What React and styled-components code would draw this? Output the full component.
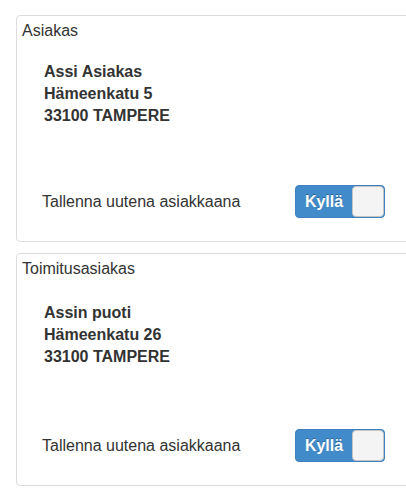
import React from "react";
import styled, { createGlobalStyle } from "styled-components";

const Global = createGlobalStyle`
  html, body { margin: 0; padding: 0; background: #fff; overflow: hidden; }
  body { font-family: "Liberation Sans", Arial, Helvetica, sans-serif; color: #333; }
`;

const Page = styled.div`
  box-sizing: border-box;
  display: flex;
  flex-direction: column;
  gap: 11px;
  padding: 15px 0 0 16px;
  width: 406px;
  overflow: hidden;
`;

const Panel = styled.section`
  box-sizing: border-box;
  flex: 0 0 auto;
  width: 404px;
  border: 1px solid #dcdcdc;
  border-radius: 4px;
  padding: 5px 0 23px 5px;
  display: flex;
  flex-direction: column;
`;

const Title = styled.h3`
  margin: 0;
  font-size: 16px;
  line-height: 20px;
  font-weight: normal;
  color: #333;
`;

const Address = styled.div`
  margin-top: ${(p) => p.$gap}px;
  padding-left: 22px;
  display: flex;
  flex-direction: column;
`;

const AddressLine = styled.div`
  font-size: 16px;
  line-height: 22px;
  font-weight: bold;
  color: #333;
`;

const Row = styled.div`
  margin-top: ${(p) => p.$gap}px;
  padding: 0 34px 0 20px;
  display: flex;
  align-items: center;
  justify-content: space-between;
`;

const Label = styled.span`
  font-size: 16px;
  line-height: 20px;
  color: #333;
`;

const Switch = styled.div`
  box-sizing: border-box;
  width: 90px;
  height: 33px;
  display: flex;
  background: #428bca;
  border: 1px solid #3f80c0;
  border-radius: 4px;
  overflow: hidden;
`;

const SwitchText = styled.span`
  flex: 1;
  display: flex;
  align-items: center;
  justify-content: center;
  color: #fff;
  font-weight: bold;
  font-size: 16px;
  text-shadow: 0 -1px 0 rgba(0, 0, 0, 0.3);
`;

const Handle = styled.span`
  box-sizing: border-box;
  width: 32px;
  height: 100%;
  background: #f4f4f4;
  border: 1px solid #c4c4c4;
  border-radius: 4px;
`;

const data = [
  {
    title: "Asiakas",
    lines: ["Assi Asiakas", "Hämeenkatu 5", "33100 TAMPERE"],
    addrGap: 20,
    rowGap: 58,
  },
  {
    title: "Toimitusasiakas",
    lines: ["Assin puoti", "Hämeenkatu 26", "33100 TAMPERE"],
    addrGap: 23,
    rowGap: 61,
  },
];

export default function App() {
  return (
    <>
      <Global />
      <Page>
        {data.map((d) => (
          <Panel key={d.title}>
            <Title>{d.title}</Title>
            <Address $gap={d.addrGap}>
              {d.lines.map((l) => (
                <AddressLine key={l}>{l}</AddressLine>
              ))}
            </Address>
            <Row $gap={d.rowGap}>
              <Label>Tallenna uutena asiakkaana</Label>
              <Switch>
                <SwitchText>Kyllä</SwitchText>
                <Handle />
              </Switch>
            </Row>
          </Panel>
        ))}
      </Page>
    </>
  );
}
